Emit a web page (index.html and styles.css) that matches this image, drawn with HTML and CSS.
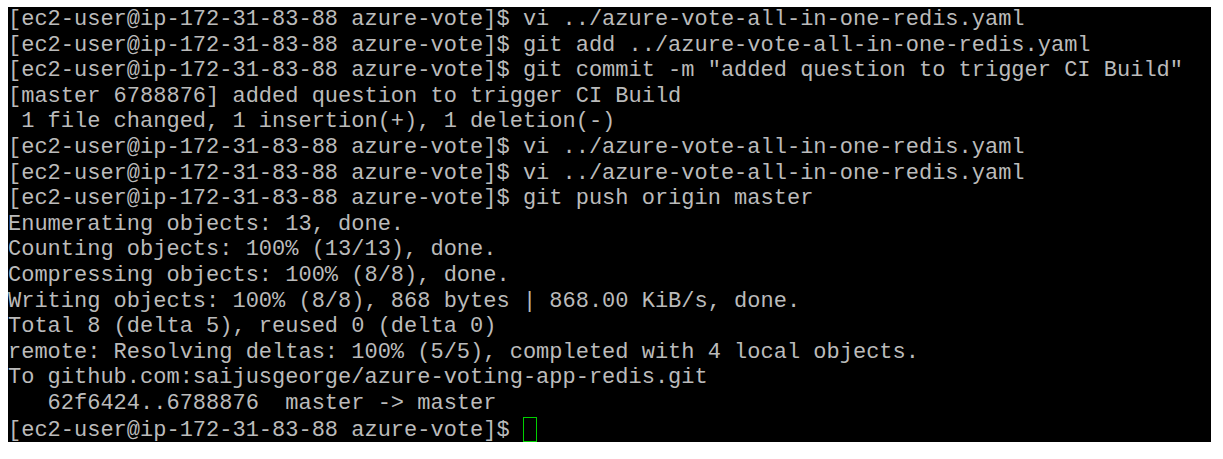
FILE: index.html
```html
<!DOCTYPE html>
<html>
<head>
<meta charset="utf-8">
<link rel="stylesheet" href="styles.css">
</head>
<body>
<div class="terminal">
<pre class="screen"><span class="line">[ec2-user@ip-172-31-83-88 azure-vote]$ vi ../azure-vote-all-in-one-redis.yaml</span>
<span class="line">[ec2-user@ip-172-31-83-88 azure-vote]$ git add ../azure-vote-all-in-one-redis.yaml</span>
<span class="line">[ec2-user@ip-172-31-83-88 azure-vote]$ git commit -m "added question to trigger CI Build"</span>
<span class="line">[master 6788876] added question to trigger CI Build</span>
<span class="line"> 1 file changed, 1 insertion(+), 1 deletion(-)</span>
<span class="line">[ec2-user@ip-172-31-83-88 azure-vote]$ vi ../azure-vote-all-in-one-redis.yaml</span>
<span class="line">[ec2-user@ip-172-31-83-88 azure-vote]$ vi ../azure-vote-all-in-one-redis.yaml</span>
<span class="line">[ec2-user@ip-172-31-83-88 azure-vote]$ git push origin master</span>
<span class="line">Enumerating objects: 13, done.</span>
<span class="line">Counting objects: 100% (13/13), done.</span>
<span class="line">Compressing objects: 100% (8/8), done.</span>
<span class="line">Writing objects: 100% (8/8), 868 bytes | 868.00 KiB/s, done.</span>
<span class="line">Total 8 (delta 5), reused 0 (delta 0)</span>
<span class="line">remote: Resolving deltas: 100% (5/5), completed with 4 local objects.</span>
<span class="line">To github.com:saijusgeorge/azure-voting-app-redis.git</span>
<span class="line">   62f6424..6788876  master -&gt; master</span>
<span class="line">[ec2-user@ip-172-31-83-88 azure-vote]$ <span class="cursor"></span></span></pre>
</div>
</body>
</html>
```
FILE: styles.css
```css
html, body {
  background: #ffffff;
}
body {
  margin: 7px 0 0 8px;
}
.terminal {
  width: 1203px;
  height: 435px;
  background: #000000;
  overflow: hidden;
}
.screen {
  margin: 0;
  font-family: "Liberation Mono", "Courier New", monospace;
  font-size: 22px;
  line-height: 25.6px;
  color: #bbbbbb;
  white-space: pre;
}
.line {
  display: inline;
}
.cursor {
  display: inline-block;
  box-sizing: border-box;
  width: 14px;
  height: 25px;
  border: 1px solid #00d000;
  vertical-align: -6px;
}
```
